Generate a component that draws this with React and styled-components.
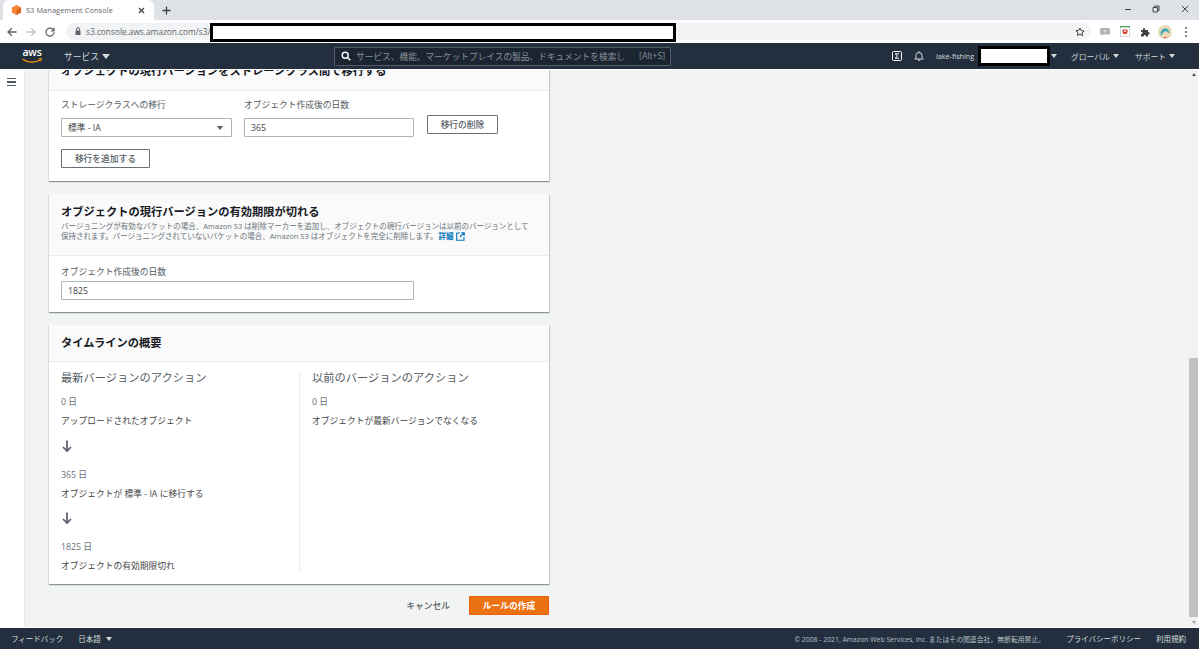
import React from 'react';
import styled, { createGlobalStyle } from 'styled-components';

const Global = createGlobalStyle`
  html, body { margin: 0; padding: 0; background: #fff; overflow: hidden; }
  body { font-family: "Open Sans", "Noto Sans CJK JP", sans-serif; color: #444; }
  * { box-sizing: border-box; }
`;
const Page = styled.div`width: 1199px; height: 650px; display: flex; flex-direction: column; background: #fff; overflow: hidden;`;
const TabStrip = styled.div`height: 20px; flex: none; background: #dee1e6; display: flex; align-items: flex-end; padding-left: 3px;`;
const Tab = styled.div`width: 151px; height: 20px; background: #fff; border-radius: 6px 6px 0 0; display: flex; align-items: center; padding: 0 9px 0 8px; gap: 4px;`;
const TabTitle = styled.span`flex: 1; font: 7.3px "Open Sans", sans-serif; color: #5f6368; letter-spacing: .12px; white-space: nowrap;`;
const NewTab = styled.div`margin-left: 8px; height: 20px; width: 12px; display: flex; align-items: center;`;
const WinControls = styled.div`margin-left: auto; display: flex; align-items: center; height: 17px; align-self: flex-start; gap: 20.5px; padding-right: 10.5px;`;
const Toolbar = styled.div`height: 23px; flex: none; background: #fff; display: flex; align-items: center; padding: 3px 0 3px 7px;`;
const NavIcons = styled.div`display: flex; gap: 9px; align-items: center; width: 59px;`;
const Omnibox = styled.div`width: 1025px; height: 17px; background: #f1f3f4; border-radius: 9px; display: flex; align-items: flex-start; padding-left: 9px;`;
const Url = styled.span`font: 8.3px/17px "Open Sans", sans-serif; color: #5f6368; margin-left: 5px; white-space: nowrap; width: 124px;`;
const UrlRedact = styled.div`width: 466px; height: 19px; border: 3px solid #000; background: #fff; flex: none;`;
const Star = styled.div`margin-left: auto; margin-right: 6px; height: 17px; display: flex; align-items: center;`;
const Extensions = styled.div`display: flex; align-items: center; gap: 10px; margin-left: 9px;`;
const Avatar = styled.svg`margin-left: -2px;`;
const Dots = styled.div`display: flex; flex-direction: column; gap: 2px; margin-left: 3px;`;
const Dot = styled.i`width: 2px; height: 2px; border-radius: 50%; background: #5f6368; display: block;`;

const TopNav = styled.header`height: 26px; flex: none; background: #232f3e; display: flex; align-items: center; color: #d5dbdb; font-size: 8px; white-space: nowrap;`;
const AwsLogo = styled.div`width: 20px; margin-left: 22px; height: 20px; position: relative; display: flex; justify-content: center;`;
const AwsText = styled.span`font: 600 10.5px/13px "Open Sans", sans-serif; color: #fff; letter-spacing: -.2px;`;
const Smile = styled.svg`position: absolute; left: 0; top: 12px;`;
const Services = styled.span`margin-left: 22px; font-size: 8.75px; display: inline-flex; align-items: center; gap: 3px; width: 46px; flex: none;`;
const Tri = styled.i`display: inline-block; border-left: ${p => p.$s || 3}px solid transparent; border-right: ${p => p.$s || 3}px solid transparent; border-top: ${p => (p.$s || 3) + 1}px solid ${p => p.$c || '#d5dbdb'}; flex: none;`;
const Search = styled.div`margin-left: 224px; width: 337px; height: 19px; border: 1px solid #545b64; background: #1b2531; border-radius: 1px; display: flex; align-items: center; padding: 0 5px 0 6px; gap: 5px; color: #879196; font-size: 8.7px; flex: none;`;
const Hint = styled.span`margin-left: auto; font-size: 8.6px; color: #879196;`;
const NavRight = styled.div`margin-left: 221px; display: flex; align-items: center;`;
const Account = styled.span`margin-left: 12px; font-size: 7.2px; color: #d5dbdb; width: 42px;`;
const NavRedact = styled.div`width: 72px; height: 20px; border: 3px solid #000; background: #fff; flex: none;`;
const Menu = styled.span`font-size: 7.8px; display: inline-flex; align-items: center; gap: 3px; margin-left: ${p => p.$ml}px;`;

const Rule = styled.div`height: 1px; flex: none; background: #fff;`;
const Body = styled.div`flex: 1; min-height: 0; display: flex;`;
const Sidebar = styled.aside`width: 25px; flex: none; background: #fff; border-right: 1px solid #e4e7e7; padding: 8px 0 0 7px;`;
const Burger = styled.div`width: 9px; display: flex; flex-direction: column; gap: 2px;`;
const BurgerBar = styled.i`height: 1.4px; background: #545b64; display: block;`;
const Main = styled.main`flex: 1; min-width: 0; background: #f2f3f3; padding: 0 0 12px 24px; display: flex; flex-direction: column; justify-content: flex-end; overflow: hidden;`;
const Card = styled.section`flex: none; width: 500px; background: #fff; box-shadow: 0 1px 1px 0 rgba(0,28,36,.3), 1px 1px 1px 0 rgba(0,28,36,.15), -1px 1px 1px 0 rgba(0,28,36,.05); margin-bottom: 13px;`;
const CardHead = styled.div`background: #fafafa; border-bottom: 1px solid #eaeded; padding: ${p => p.$pad};`;
const CardTitle = styled.h2`margin: 0 0 ${p => p.$mb || 0}px; font: 700 11.25px/16px "Open Sans", "Noto Sans CJK JP", sans-serif; color: #16191f;`;
const Desc = styled.p`margin: 0; font-size: 7.5px; line-height: 10px; color: #687078; white-space: pre-line;`;
const LinkText = styled.a`color: #0073bb; font-weight: 700; margin-left: 1px;`;
const ExtLink = styled.svg`vertical-align: -1.5px; margin-left: 3px;`;
const CardBody = styled.div`padding: ${p => p.$pad};`;
const Row = styled.div`display: flex; gap: 12px; align-items: flex-start;`;
const Field = styled.div`width: ${p => p.$w}px; flex: none;`;
const Label = styled.div`font-size: 8.75px; line-height: 12px; color: #545b64; margin-bottom: ${p => p.$mb}px;`;
const SelectBox = styled.div`height: 19px; background: #fff; border: 1px solid #aab7b8; border-radius: 1px; padding: 0 8px 0 6px; display: flex; align-items: center; justify-content: space-between; font-size: 8.75px; color: #444;`;
const TextInput = styled.input`display: block; width: 100%; height: 19px; background: #fff; border: 1px solid #aab7b8; border-radius: 1px; padding: 0 6px; font: 8.75px "Open Sans", "Noto Sans CJK JP", sans-serif; color: #444; outline: none;`;
const Btn = styled.button`display: block; height: 19px; width: ${p => p.$w}px; flex: none; margin: ${p => p.$m || 0}; background: #fff; border: 1px solid #687078; border-radius: 1px; font: 500 8.75px "Open Sans", "Noto Sans CJK JP", sans-serif; color: #545b64; padding: 0;`;
const Columns = styled.div`display: flex; padding: 10px 0 12px 12px;`;
const Col = styled.div`width: ${p => p.$w}px; flex: none; ${p => p.$border ? 'border-right: 1px solid #eaeded;' : ''} ${p => p.$pl ? `padding-left: ${p.$pl}px;` : ''}`;
const ColTitle = styled.h3`margin: 0 0 12px; font: 400 11.25px/12px "Open Sans", "Noto Sans CJK JP", sans-serif; color: #545b64;`;
const Days = styled.div`font-size: 8.75px; line-height: 12px; color: #687078; margin: 8px 0 7px;`;
const Step = styled.div`font-size: 8.75px; line-height: 12px; color: #444;`;
const ArrowWrap = styled.div`height: 22px; margin: 11.5px 0 0; display: flex;`;
const Actions = styled.div`display: flex; justify-content: flex-end; align-items: center; width: 500px; flex: none; margin-top: -1px;`;
const Cancel = styled.span`font-size: 8.75px; font-weight: 500; color: #545b64; margin-right: 19px;`;
const Primary = styled.button`width: 80px; height: 19px; background: #ec7211; border: 1px solid #eb5f07; border-radius: 1px; color: #fff; font: 700 8.75px "Open Sans", "Noto Sans CJK JP", sans-serif; padding: 0;`;
const Scrollbar = styled.div`width: 9px; flex: none; margin-right: 1px; background: #f1f1f1; display: flex; flex-direction: column; align-items: stretch;`;
const ScrollBtn = styled.div`height: 9px; flex: none; display: flex; align-items: center; justify-content: center;`;
const ScrollSpace = styled.div`flex: 1;`;
const Thumb = styled.div`height: 259px; background: #c1c1c1; flex: none; margin-bottom: 1px;`;
const UpTri = styled.i`border-left: 2.5px solid transparent; border-right: 2.5px solid transparent; border-bottom: 3px solid #505050; display: block;`;
const DownTri = styled.i`border-left: 2.5px solid transparent; border-right: 2.5px solid transparent; border-top: 3px solid #a0a0a0; display: block;`;
const Footer = styled.footer`height: 21px; flex: none; background: #232f3e; display: flex; align-items: center; padding: 0 13px 0 11px; color: #d5dbdb; white-space: nowrap;`;
const FootLink = styled.span`font-size: 7.5px; margin-left: ${p => p.$ml || 0}px; display: inline-flex; align-items: center; gap: 5px;`;
const Copy = styled.span`margin-left: auto; font-size: 6.85px; color: #b6c0c4;`;

const Arrow = () => (
  <svg width="12" height="14" viewBox="0 0 12 14" fill="none" stroke="#545b64" strokeWidth="1.7"><path d="M6 1.5V12M2 8l4 4 4-4" /></svg>
);

export default function App() {
  return (
    <Page>
      <Global />
      <TabStrip>
        <Tab>
          <svg width="11" height="12" viewBox="0 0 12 12"><path d="M6 .5l5 2.7v5.6L6 11.5 1 8.8V3.2z" fill="#f58534" /><path d="M6 6l5-2.8v5.6L6 11.5z" fill="#d9661f" /></svg>
          <TabTitle>S3 Management Console</TabTitle>
          <svg width="7" height="7" viewBox="0 0 7 7" stroke="#3c4043" strokeWidth="1.2"><path d="M1 1l5 5M6 1L1 6" /></svg>
        </Tab>
        <NewTab><svg width="9" height="9" viewBox="0 0 9 9" stroke="#3c4043" strokeWidth="1.3"><path d="M4.5 .5v8M.5 4.5h8" /></svg></NewTab>
        <WinControls>
          <svg width="8" height="8" viewBox="0 0 8 8" stroke="#444" strokeWidth="1"><path d="M1 4.5h6" /></svg>
          <svg width="8" height="8" viewBox="0 0 8 8" fill="none" stroke="#444" strokeWidth="1"><path d="M1 2.5h4.5V7H1zM2.5 2.5V1H7v4.5H5.5" /></svg>
          <svg width="8" height="8" viewBox="0 0 8 8" stroke="#444" strokeWidth="1"><path d="M.8.8l6.4 6.4M7.2.8L.8 7.2" /></svg>
        </WinControls>
      </TabStrip>
      <Toolbar>
        <NavIcons>
          <svg width="10" height="10" viewBox="0 0 10 10" fill="none" stroke="#5f6368" strokeWidth="1.3"><path d="M9.5 5H1M4.8 1.2L1 5l3.8 3.8" /></svg>
          <svg width="10" height="10" viewBox="0 0 10 10" fill="none" stroke="#bdc1c6" strokeWidth="1.3"><path d="M.5 5H9M5.2 1.2L9 5 5.2 8.8" /></svg>
          <svg width="10" height="10" viewBox="0 0 10 10" fill="none" stroke="#5f6368" strokeWidth="1.2"><path d="M8.6 3.4A4 4 0 1 0 9 5.2" /><path d="M9 .8v3H6" /></svg>
        </NavIcons>
        <Omnibox>
          <svg width="6" height="17" viewBox="0 0 6 17"><path d="M.5 7.5h5V12h-5z" fill="#5f6368" /><path d="M1.6 7.5V6a1.4 1.4 0 0 1 2.8 0v1.5" fill="none" stroke="#5f6368" /></svg>
          <Url>s3.console.aws.amazon.com/s3/</Url>
          <UrlRedact />
          <Star>
            <svg width="10" height="10" viewBox="0 0 24 24" fill="none" stroke="#3c4043" strokeWidth="2.4"><path d="M12 2.5l2.9 6.3 6.9.8-5.1 4.7 1.4 6.8L12 17l-6.1 3.4 1.4-6.8-5.1-4.7 6.9-.8z" /></svg>
          </Star>
        </Omnibox>
        <Extensions>
          <svg width="10" height="8" viewBox="0 0 10 8"><rect width="10" height="6.500" rx="1.500" fill="#aeb2b6" /><path d="M2 6l-.8 2 3-2z" fill="#aeb2b6" /><circle cx="5" cy="3.200" r="1.500" fill="#d5d8da" /></svg>
          <svg width="10" height="11" viewBox="0 0 10 11"><rect x=".5" y="1" width="9" height="9.5" fill="#fff" stroke="#bbb" strokeWidth=".6" /><rect width="10" height="1.2" fill="#3aa757" /><path d="M2.5 3.5h5v2.3c0 1.3-1.2 2.2-2.5 2.7-1.3-.5-2.5-1.4-2.5-2.7z" fill="#d23f31" /><circle cx="5" cy="5.2" r=".9" fill="#fff" /></svg>
          <svg width="10" height="10" viewBox="0 0 10 10"><path d="M1 3h2V2a1 1 0 0 1 2 0v1h3v2.2h.7a1.1 1.1 0 0 1 0 2.2H8V9.5H5.8V9a1 1 0 0 0-2 0v.5H1V7h.5a1.1 1.1 0 0 0 0-2.2H1z" fill="#3c4043" /></svg>
          <Avatar width="14" height="14" viewBox="0 0 14 14"><circle cx="7" cy="7" r="7" fill="#e8d9b8" /><path d="M3 11c-1-3 0-7 4-7.5 3-.3 4.500 2 4 5l-2-2H6z" fill="#3fa7b5" /><circle cx="7.500" cy="8.500" r="2" fill="#f3d3bd" /><path d="M5 13c1-1.500 3-1.500 4.500 0z" fill="#d8483f" /></Avatar>
          <Dots><Dot /><Dot /><Dot /></Dots>
        </Extensions>
      </Toolbar>
      <TopNav>
        <AwsLogo>
          <AwsText>aws</AwsText>
          <Smile width="21" height="6" viewBox="0 0 21 6" fill="none"><path d="M.5 1c5 4 13 4.200 18 .8" stroke="#ff9900" strokeWidth="1.200" /><path d="M16.500 .8l3-.3-.8 2.800" stroke="#ff9900" strokeWidth="1" /></Smile>
        </AwsLogo>
        <Services>サービス <Tri $s={4} /></Services>
        <Search>
          <svg width="10" height="10" viewBox="0 0 10 10" fill="none" stroke="#fff" strokeWidth="1.400"><circle cx="4.200" cy="4.200" r="3" /><path d="M6.500 6.500L9.300 9.300" /></svg>
          <span>サービス、機能、マーケットプレイスの製品、ドキュメントを検索し</span>
          <Hint>[Alt+S]</Hint>
        </Search>
        <NavRight>
          <svg width="10" height="10" viewBox="0 0 10 10" fill="none" stroke="#fff"><rect x=".5" y=".5" width="9" height="9" rx="1" /><path d="M7 2.800H3.200L5.500 5 3.200 7.200H7" /></svg>
          <svg width="10" height="10" viewBox="0 0 10 10" fill="none" stroke="#d5dbdb" style={{ marginLeft: 12 }}><path d="M.8 8h8.400L8 6.500V4.500a3 3 0 0 0-6 0v2z" /><path d="M4 8.500a1 1 0 0 0 2 0M5 .3v1" /></svg>
          <Account>lake-fishing</Account>
          <NavRedact />
          <Tri $s={3} style={{ marginLeft: 1 }} />
          <Menu $ml={14}>グローバル <Tri $s={3} /></Menu>
          <Menu $ml={16}>サポート <Tri $s={3} /></Menu>
        </NavRight>
      </TopNav>
      <Rule />
      <Body>
        <Sidebar><Burger><BurgerBar /><BurgerBar /><BurgerBar /></Burger></Sidebar>
        <Main>
          <Card>
            <CardHead $pad="0 12px 11px">
              <CardTitle>オブジェクトの現行バージョンをストレージクラス間で移行する</CardTitle>
            </CardHead>
            <CardBody $pad="8px 12px 13px">
              <Row>
                <Field $w={171}>
                  <Label $mb={7}>ストレージクラスへの移行</Label>
                  <SelectBox>標準 - IA<Tri $s={3.5} $c="#545b64" /></SelectBox>
                </Field>
                <Field $w={170}>
                  <Label $mb={7}>オブジェクト作成後の日数</Label>
                  <TextInput readOnly value="365" />
                </Field>
                <Btn $w={71} $m="16px 0 0 1px">移行の削除</Btn>
              </Row>
              <Btn $w={89} $m="12px 0 0">移行を追加する</Btn>
            </CardBody>
          </Card>
          <Card>
            <CardHead $pad="10px 12px 14px">
              <CardTitle $mb={1}>オブジェクトの現行バージョンの有効期限が切れる</CardTitle>
              <Desc>
                バージョニングが有効なバケットの場合、Amazon S3 は削除マーカーを追加し、オブジェクトの現行バージョンは以前のバージョンとして{'\n'}保持されます。バージョニングされていないバケットの場合、Amazon S3 はオブジェクトを完全に削除します。
                <LinkText>詳細</LinkText>
                <ExtLink width="9" height="9" viewBox="0 0 9 9" fill="none" stroke="#0073bb" strokeWidth="1.100"><path d="M4 1H.7v7.300H8V5M4 5l4-4M5.300 .7h3v3" /></ExtLink>
              </Desc>
            </CardHead>
            <CardBody $pad="10px 12px 12px">
              <Field $w={353}>
                <Label $mb={3}>オブジェクト作成後の日数</Label>
                <TextInput readOnly value="1825" />
              </Field>
            </CardBody>
          </Card>
          <Card>
            <CardHead $pad="10px 12px 10px"><CardTitle>タイムラインの概要</CardTitle></CardHead>
            <Columns>
              <Col $w={239} $border>
                <ColTitle>最新バージョンのアクション</ColTitle>
                <Days>0 日</Days>
                <Step>アップロードされたオブジェクト</Step>
                <ArrowWrap><Arrow /></ArrowWrap>
                <Days>365 日</Days>
                <Step>オブジェクトが 標準 - IA に移行する</Step>
                <ArrowWrap><Arrow /></ArrowWrap>
                <Days>1825 日</Days>
                <Step>オブジェクトの有効期限切れ</Step>
              </Col>
              <Col $w={240} $pl={12}>
                <ColTitle>以前のバージョンのアクション</ColTitle>
                <Days>0 日</Days>
                <Step>オブジェクトが最新バージョンでなくなる</Step>
              </Col>
            </Columns>
          </Card>
          <Actions>
            <Cancel>キャンセル</Cancel>
            <Primary>ルールの作成</Primary>
          </Actions>
        </Main>
        <Scrollbar>
          <ScrollBtn><UpTri /></ScrollBtn>
          <ScrollSpace />
          <Thumb />
          <ScrollBtn><DownTri /></ScrollBtn>
        </Scrollbar>
      </Body>
      <Rule />
      <Footer>
        <FootLink>フィードバック</FootLink>
        <FootLink $ml={15}>日本語 <Tri $s={3} /></FootLink>
        <Copy>© 2008 - 2021, Amazon Web Services, Inc. またはその関連会社。無断転用禁止。</Copy>
        <FootLink $ml={21}>プライバシーポリシー</FootLink>
        <FootLink $ml={15}>利用規約</FootLink>
      </Footer>
      <Rule />
    </Page>
  );
}
